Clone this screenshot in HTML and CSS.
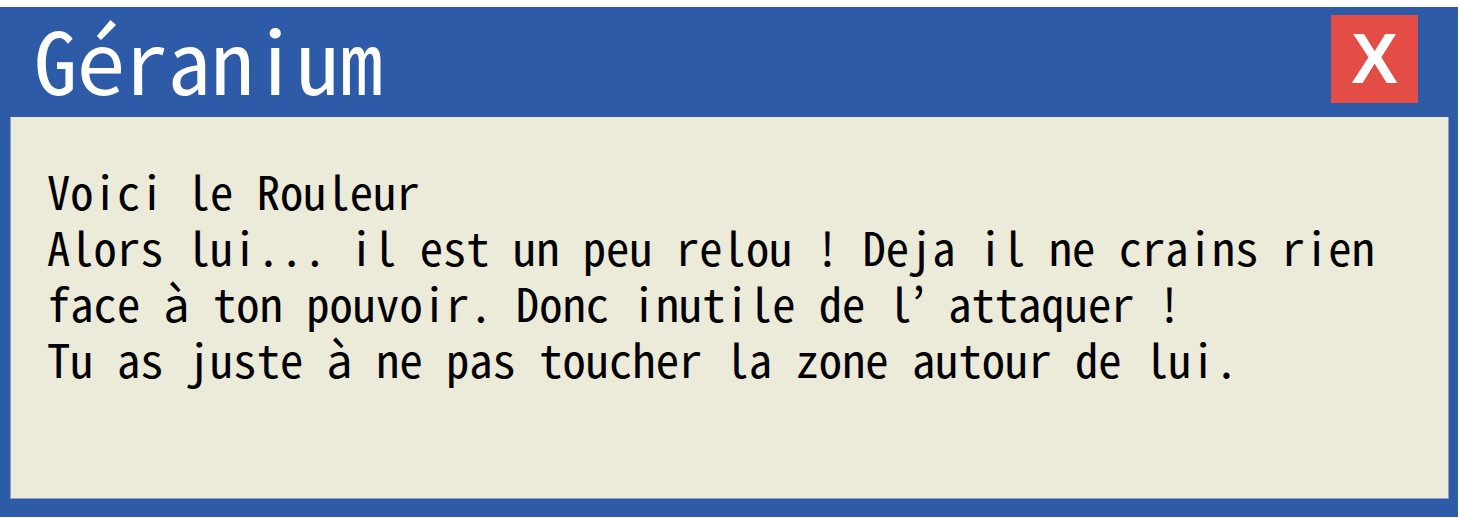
FILE: index.html
```html
<!DOCTYPE html>
<html lang="fr">
<head>
<meta charset="utf-8">
<title>Géranium</title>
<link rel="stylesheet" href="styles.css">
</head>
<body>
<div class="window">
  <div class="titlebar">
    <div class="title">Géranium</div>
    <div class="close">X</div>
  </div>
  <div class="panel">
    <p class="text">Voici le Rouleur<br>Alors lui... il est un peu relou ! Deja il ne crains rien<br>face à ton pouvoir. Donc inutile de l’ attaquer !<br>Tu as juste à ne pas toucher la zone autour de lui.</p>
  </div>
</div>
</body>
</html>
```
FILE: styles.css
```css
html, body {
  margin: 0;
  padding: 0;
  background: #ffffff;
}
body {
  padding-top: 7px;
}
.window {
  width: 1458px;
  height: 510px;
  box-sizing: border-box;
  background: #2e5ba7;
  padding: 0 9px 18px 10px;
  display: flex;
  flex-direction: column;
}
.titlebar {
  height: 110px;
  flex: none;
  display: flex;
  align-items: flex-start;
  justify-content: space-between;
  padding-right: 31px;
}
.title {
  font-family: "Noto Sans Mono CJK JP", "Noto Sans CJK JP", monospace;
  font-size: 86px;
  line-height: 104px;
  color: #ffffff;
  margin-top: -1px;
  padding-left: 24px;
}
.close {
  width: 87px;
  height: 88px;
  margin-top: 8px;
  background: #e44d45;
  color: #ffffff;
  font-family: "Liberation Sans", Arial, sans-serif;
  font-weight: bold;
  font-size: 70px;
  display: flex;
  align-items: center;
  justify-content: center;
}
.panel {
  flex: 1;
  background: #ecead9;
  border: 1px solid #8c9cc4;
  border-top: none;
  padding: 45px 0 0 36px;
}
.text {
  margin: 0;
  font-family: "Noto Sans Mono CJK JP", "Noto Sans CJK JP", monospace;
  font-size: 46.6px;
  line-height: 56px;
  color: #000000;
  white-space: nowrap;
}
```
